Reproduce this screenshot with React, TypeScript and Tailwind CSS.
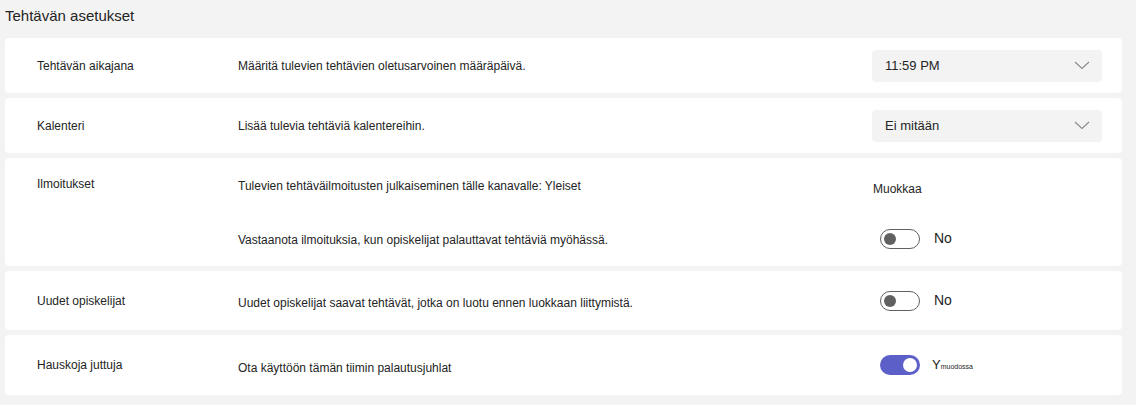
import React from 'react';

const Toggle = ({ on }: { on: boolean }) =>
  on ? (
    <div className="w-[40px] h-[20px] rounded-full bg-[#5b5fc7] flex items-center justify-end px-[3px]">
      <div className="w-[14px] h-[14px] rounded-full bg-white" />
    </div>
  ) : (
    <div className="w-[40px] h-[20px] rounded-full border border-[#616161] bg-white flex items-center px-[3px]">
      <div className="w-[12px] h-[12px] rounded-full bg-[#616161]" />
    </div>
  );

const Chevron = () => (
  <svg width="16" height="9" viewBox="0 0 16 9" fill="none">
    <path d="M1 1 L8 7.5 L15 1" stroke="#8a8a8a" strokeWidth="1.1" />
  </svg>
);

const Select = ({ value }: { value: string }) => (
  <div className="w-[230px] h-[32px] rounded-[4px] bg-[#f3f3f3] flex items-center justify-between pl-[13px] pr-[12px]">
    <span className="text-[13px] text-[#242424]">{value}</span>
    <Chevron />
  </div>
);

const App = () => {
  return (
    <div className="min-h-[405px] bg-[#f3f3f3] text-[#242424] pl-[5px] pr-[14px]" style={{ fontFamily: '"Liberation Sans", Arial, sans-serif' }}>
      <h1 className="text-[15px] leading-[20px] pt-[6px] pb-[12px]">Tehtävän asetukset</h1>

      <div className="flex flex-col gap-[5px] text-[12px]">
        {/* Aikajana */}
        <div className="bg-white rounded-[4px] h-[55px] flex items-center pl-[32px] pr-[20px]">
          <div className="w-[201px]">Tehtävän aikajana</div>
          <div className="flex-1">Määritä tulevien tehtävien oletusarvoinen määräpäivä.</div>
          <Select value="11:59 PM" />
        </div>

        {/* Kalenteri */}
        <div className="bg-white rounded-[4px] h-[55px] flex items-center pl-[32px] pr-[20px]">
          <div className="w-[201px]">Kalenteri</div>
          <div className="flex-1">Lisää tulevia tehtäviä kalentereihin.</div>
          <Select value="Ei mitään" />
        </div>

        {/* Ilmoitukset */}
        <div className="bg-white rounded-[4px] h-[108px] flex pl-[32px] pr-[20px] pt-[18px]">
          <div className="w-[201px] leading-[17px]">Ilmoitukset</div>
          <div className="flex-1 flex flex-col">
            <div className="leading-[17px] mt-[2px]">Tulevien tehtäväilmoitusten julkaiseminen tälle kanavalle: Yleiset</div>
            <div className="leading-[17px] mt-[37px]">Vastaanota ilmoituksia, kun opiskelijat palauttavat tehtäviä myöhässä.</div>
          </div>
          <div className="w-[230px] flex flex-col">
            <div className="leading-[17px] mt-[5px] pl-[1px]">Muokkaa</div>
            <div className="flex items-center gap-[14px] pl-[8px] mt-[30px]">
              <Toggle on={false} />
              <span className="text-[14px]">No</span>
            </div>
          </div>
        </div>

        {/* Uudet opiskelijat */}
        <div className="bg-white rounded-[4px] h-[59px] flex items-center pl-[32px] pr-[20px]">
          <div className="w-[201px]">Uudet opiskelijat</div>
          <div className="flex-1 pt-[4px]">Uudet opiskelijat saavat tehtävät, jotka on luotu ennen luokkaan liittymistä.</div>
          <div className="w-[230px] flex items-center gap-[14px] pl-[8px]">
            <Toggle on={false} />
            <span className="text-[14px]">No</span>
          </div>
        </div>

        {/* Hauskoja juttuja */}
        <div className="bg-white rounded-[4px] h-[60px] flex items-center pl-[32px] pr-[20px]">
          <div className="w-[201px]">Hauskoja juttuja</div>
          <div className="flex-1 pt-[6px]">Ota käyttöön tämän tiimin palautusjuhlat</div>
          <div className="w-[230px] flex items-center gap-[12px] pl-[8px]">
            <Toggle on={true} />
            <span className="text-[13px]">
              Y<span className="text-[7px]">muodossa</span>
            </span>
          </div>
        </div>
      </div>
    </div>
  );
};

export default App;
